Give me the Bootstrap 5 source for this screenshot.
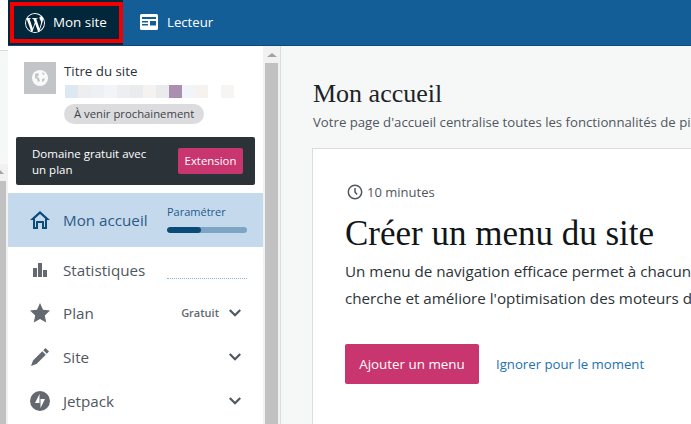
<!DOCTYPE html>
<html lang="fr"><head><meta charset="utf-8"><title>Mon accueil</title>
<link href="https://cdn.jsdelivr.net/npm/bootstrap@5.3.0/dist/css/bootstrap.min.css" rel="stylesheet">
<style>
html,body{height:424px;overflow:hidden}
body{font-family:"Open Sans","Noto Sans",sans-serif;background:#f6f7f7;color:#2c3338}
.topwrap{height:46px;background:#fff;padding-left:8px}
.topbar{height:46px;background:#135e96;border-bottom:1px solid #0f4a77}
.topitem{color:#fff;font-size:13.4px;gap:8px}
.topitem-site{background:#02263a;height:45px;width:115px;padding:2px 0 2px 2px;flex:none}
.siteframe{border:4px solid #f00000;width:113px;height:41px;padding-left:11px;gap:8px}
.topitem-read{padding-left:17px;font-size:13.2px;gap:9px}
.shell{height:378px}
.gutter{width:8px;flex:none;background:#f1f1f1}
.gut-a{height:5px;background:#fff;border-bottom:1px solid #dcdcde}
.gut-b{height:113px;background:#f6f7f7}
.gut-c{height:17px;position:relative;overflow:hidden}
.gut-c i{position:absolute;left:-4px;top:6px;width:0;border:4px solid transparent;border-bottom:4px solid #a3a3a3;border-top:0}
.gut-d{height:243px;width:6px;background:#c1c1c1}
.sidebar{width:255px;background:#fff;flex:none;overflow:hidden}
.scrolltrack{width:17px;background:#f1f1f1;flex:none;display:flex;flex-direction:column;padding:0 2px}
.scrollarrow{height:17px;display:flex;align-items:center;justify-content:center}
.scrollthumb{background:#c1c1c1;flex:1}
.scrollarrow i{border:5px solid transparent;border-bottom:4px solid #a3a3a3;border-top:0;display:block;width:0}
.siteblock{padding:16px 16px 0 16px;gap:8px;height:91px}
.siteico{width:32px;height:32px;background:#c3c4c7;flex:none}
.sitetitle{font-size:13.3px;line-height:20px;margin-top:-1px}
.blurstrip{height:13px;margin-top:4px;margin-left:1px}
.blurstrip span{display:block;width:13px;height:13px}
.sbadge{background:#dcdcde;border-radius:10px;font-size:11.3px;line-height:20px;height:20px;padding:0 10px;display:inline-block;margin-top:6px;white-space:nowrap;color:#3c434a}
.promo{background:#2c3338;color:#fff;margin:0 8px;height:48px;border-radius:2px;font-size:11.5px;line-height:16px;padding:1px 12px 0 16px}
.promobtn{background:#c9356e;border-radius:2px;font-size:11.4px;font-weight:500;color:#fff;height:26px;line-height:26px;width:65px;text-align:center;flex:none;white-space:nowrap;margin-top:-1px}
.navitem{height:44px;padding-left:22px;font-size:15.2px;color:#50575e;white-space:nowrap}
.navlabel{margin-left:13px}
.navicon{width:20px;height:20px;flex:none;fill:#646970}
.current{background:#c5d9ed;height:54px;margin-top:8px;color:#135e96}
.current .navicon{fill:#0a4b78}
.current .navlabel{color:#2c5a85}
.setup{margin-left:auto;width:80px;margin-right:16px;font-size:11px;line-height:16px;color:#1e5b8c;margin-top:-3px}
.setupbar{height:6px;border-radius:3px;background:#7ea5c4;margin-top:7px;overflow:hidden}
.setupbar b{display:block;height:6px;background:#0a4b78;border-radius:3px}
.dotted{margin-left:auto;margin-right:16px;width:80px;border-bottom:1px dotted #8fb3d0;align-self:flex-end;margin-bottom:12px}
.statrow{padding-top:2px}
.navright{margin-left:auto;margin-right:22px;gap:10px;font-size:11px;font-weight:600;color:#646970}
.chev{width:12px;height:8px;fill:none;stroke:#50575e;stroke-width:2.200}
.jet{font-weight:500}
.main{flex:1;min-width:0;overflow:hidden;padding:32px 0 0 32px;border-left:1px solid #dcdcde;white-space:nowrap}
.pagetitle{font-family:"Liberation Serif",serif;font-size:26px;line-height:32px;margin:0;color:#1d2327;font-weight:400}
.pagesub{font-size:13.2px;line-height:20px;color:#50575e;margin-top:2px}
.taskcard{background:#fff;border:1px solid #dcdcde;margin:16px 0 0 -1px;height:300px;padding:33px 0 0 32px;border-right:0;width:400px}
.dur{font-size:13px;color:#50575e;gap:4px;line-height:20px;padding-left:2px}
.tasktitle{font-family:"Liberation Serif",serif;font-size:35px;line-height:42px;font-weight:400;color:#101517;margin:11px 0 0}
.taskbody{font-size:15.2px;line-height:27px;color:#2c3338;margin:0;padding-top:3px}
.taskrow{margin-top:32px}
.taskbtn{background:#c9356e;color:#fff;font-size:13.4px;border-radius:2px;height:40px;width:134px;border:0;padding:0;line-height:38px}
.skip{color:#2271b1;font-size:13.2px;margin-left:17px;text-decoration:none;padding-top:2px}
</style></head><body>
<div class="topwrap">
<nav class="topbar d-flex align-items-center">
  <a class="topitem topitem-site d-flex text-decoration-none">
    <span class="siteframe d-flex align-items-center">
    <svg width="20" height="20" viewBox="0 0 24 24" fill="#fff"><path d="M12 0a12 12 0 1 0 0 24 12 12 0 0 0 0-24zM1.200 12c0-1.560.33-3.050.94-4.400l5.150 14.100A10.800 10.800 0 0 1 1.200 12zM12 22.800c-1.060 0-2.080-.15-3.050-.44l3.240-9.410 3.320 9.090.08.15c-1.120.4-2.330.61-3.590.61zm1.490-15.860c.65-.03 1.230-.1 1.230-.1.58-.07.51-.92-.07-.89 0 0-1.740.14-2.870.14-1.060 0-2.840-.14-2.840-.14-.58-.03-.65.85-.07.89 0 0 .55.07 1.130.1l1.680 4.600-2.360 7.070-3.920-11.670c.65-.03 1.230-.1 1.230-.1.58-.07.51-.92-.07-.89 0 0-1.740.14-2.870.14l-.69-.01A10.780 10.780 0 0 1 12 1.200c2.820 0 5.380 1.080 7.300 2.840h-.14c-1.060 0-1.820.93-1.820 1.920 0 .89.51 1.650 1.060 2.540.41.72.89 1.650.89 2.980 0 .93-.35 2-.82 3.500l-1.080 3.600-3.900-11.640zm3.940 14.380l3.300-9.540c.62-1.540.82-2.770.82-3.870 0-.4-.03-.77-.07-1.110A10.800 10.800 0 0 1 22.800 12c0 3.980-2.160 7.460-5.370 9.320z"/></svg>
    <span>Mon site</span>
    </span>
  </a>
  <a class="topitem topitem-read d-flex align-items-center text-decoration-none">
    <svg width="18" height="18" viewBox="0 0 18 18"><path fill="#fff" fill-rule="evenodd" d="M1.500 1h15A1.500 1.500 0 0 1 18 2.500v13a1.500 1.500 0 0 1-1.500 1.500h-15A1.500 1.500 0 0 1 0 15.500v-13A1.500 1.500 0 0 1 1.500 1zM2 4v2h14V4zm0 4v1.500h6V8zm0 3v1.500h6V11zm8-3v4.500h6V8z"/></svg>
    <span>Lecteur</span>
  </a>
</nav>
</div>
<div class="shell d-flex">
  <div class="gutter"><div class="gut-a"></div><div class="gut-b"></div><div class="gut-c"><i></i></div><div class="gut-d"></div></div>
  <aside class="sidebar">
    <div class="siteblock d-flex">
      <div class="siteico d-flex align-items-center justify-content-center">
        <svg width="16" height="16" viewBox="0 0 16 16"><circle cx="8" cy="8" r="8" fill="#fff" opacity=".9"/><path fill="#c3c4c7" d="M3 4l3-1 1 2-2 2 2 1 1 3-2 1-1-3-2-1zM10 2l3 2-2 1zM10 9l3-1-1 3-2 1z"/></svg>
      </div>
      <div class="flex-grow-1">
        <div class="sitetitle">Titre du site</div>
        <div class="blurstrip d-flex" aria-hidden="true"><span style="background:#dce8f2"></span><span style="background:#eeeeef"></span><span style="background:#edf0f5"></span><span style="background:#f2f4f7"></span><span style="background:#eceef1"></span><span style="background:#eaebed"></span><span style="background:#f6f2f0"></span><span style="background:#eaebed"></span><span style="background:#ab8fae"></span><span style="background:#f1f4f8"></span><span style="background:#f6f2ed"></span><span style="background:#fff"></span><span style="background:#f6f5f4"></span></div>
        <span class="sbadge">À venir prochainement</span>
      </div>
    </div>
    <div class="promo d-flex align-items-center justify-content-between">
      <div>Domaine gratuit avec<br>un plan</div>
      <div class="promobtn">Extension</div>
    </div>
    <div class="navitem current d-flex align-items-center">
      <svg class="navicon" viewBox="0 0 20 20"><path fill-rule="evenodd" d="M10 1 0 10h3v9h5v-6h4v6h5v-9h3zM10 4l5 4.600V17h-1v-6H6v6H5V8.600z"/></svg>
      <span class="navlabel">Mon accueil</span>
      <div class="setup">Paramétrer<div class="setupbar"><b style="width:42%"></b></div></div>
    </div>
    <div class="navitem statrow d-flex align-items-center">
      <svg class="navicon" viewBox="0 0 20 20"><path d="M3 8h4v9H3zM8 3h4v14H8zM13 10h4v7h-4z"/></svg>
      <span class="navlabel">Statistiques</span>
      <div class="dotted"></div>
    </div>
    <div class="navitem d-flex align-items-center">
      <svg class="navicon" viewBox="0 0 20 20"><path d="M10 0l3 6.800 7 .8-5.200 4.800 1.400 7.100L10 15.900l-6.200 3.600 1.400-7.100L0 7.600l7-.8z"/></svg>
      <span class="navlabel">Plan</span>
      <div class="navright d-flex align-items-center"><span>Gratuit</span><svg class="chev" viewBox="0 0 12 8"><path d="M.8 1l5.200 5.200L11.200 1"/></svg></div>
    </div>
    <div class="navitem d-flex align-items-center">
      <svg class="navicon" viewBox="0 0 20 20"><path d="M15.500 1l3.500 3.500-2.200 2.200L13.300 3.200zM12.300 4.200l3.500 3.500L6.500 17 1 19l2-5.500z"/></svg>
      <span class="navlabel">Site</span>
      <div class="navright d-flex align-items-center"><svg class="chev" viewBox="0 0 12 8"><path d="M.8 1l5.200 5.200L11.200 1"/></svg></div>
    </div>
    <div class="navitem d-flex align-items-center">
      <svg class="navicon" viewBox="0 0 20 20"><path fill-rule="evenodd" d="M10 0a10 10 0 1 0 0 20 10 10 0 0 0 0-20zM9.500 3v9H5zM10.500 17V8H15z"/></svg>
      <span class="navlabel jet">Jetpack</span>
      <div class="navright d-flex align-items-center"><svg class="chev" viewBox="0 0 12 8"><path d="M.8 1l5.200 5.200L11.200 1"/></svg></div>
    </div>
  </aside>
  <div class="scrolltrack"><div class="scrollarrow"><i></i></div><div class="scrollthumb"></div></div>
  <main class="main">
    <h1 class="pagetitle">Mon accueil</h1>
    <div class="pagesub">Votre page d'accueil centralise toutes les fonctionnalités de pilotage de votre site</div>
    <section class="taskcard">
      <div class="dur d-flex align-items-center">
        <svg width="16" height="16" viewBox="0 0 16 16" fill="none" stroke="#50575e" stroke-width="1.500"><circle cx="8" cy="8" r="6.700"/><path d="M8 4v4l2 2.500"/></svg>
        <span>10 minutes</span>
      </div>
      <h2 class="tasktitle">Créer un menu du site</h2>
      <p class="taskbody">Un menu de navigation efficace permet à chacun de trouver ce qu'il<br>cherche et améliore l'optimisation des moteurs de recherche</p>
      <div class="taskrow d-flex align-items-center">
        <button class="btn taskbtn">Ajouter un menu</button>
        <a class="skip" href="#">Ignorer pour le moment</a>
      </div>
    </section>
  </main>
</div>
</body></html>
